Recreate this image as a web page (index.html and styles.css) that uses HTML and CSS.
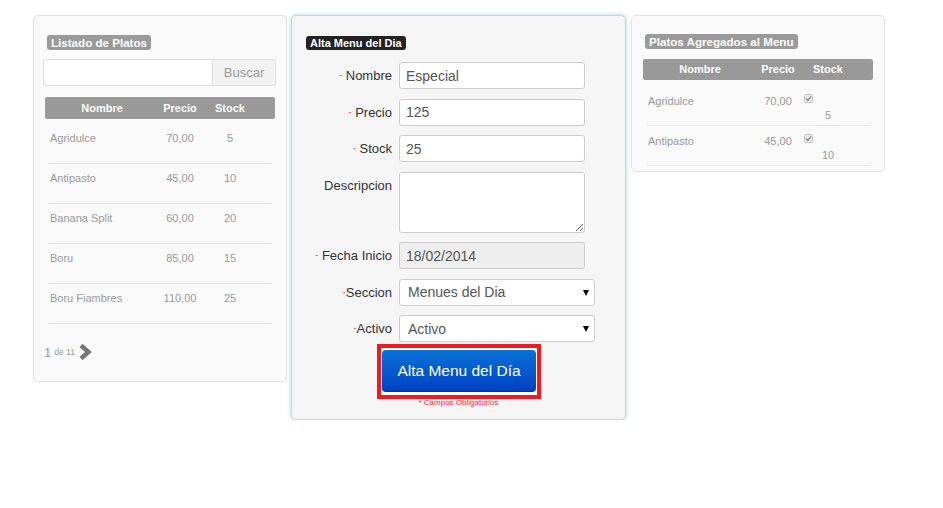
FILE: index.html
```html
<!DOCTYPE html>
<html lang="es">
<head>
<meta charset="utf-8">
<title>Alta Menu del Día</title>
<link rel="stylesheet" href="styles.css">
</head>
<body>
<div class="page">
  <section class="panel panel-list">
    <span class="tag tag-gray">Listado de Platos</span>
    <div class="search">
      <input class="search-input" type="text">
      <button class="search-btn" type="button">Buscar</button>
    </div>
    <div class="thead"><span>Nombre</span><span>Precio</span><span>Stock</span></div>
    <div class="rows">
      <div class="row"><span class="c-name">Agridulce</span><span class="c-num">70,00</span><span class="c-num">5</span></div>
      <div class="row"><span class="c-name">Antipasto</span><span class="c-num">45,00</span><span class="c-num">10</span></div>
      <div class="row"><span class="c-name">Banana Split</span><span class="c-num">60,00</span><span class="c-num">20</span></div>
      <div class="row"><span class="c-name">Boru</span><span class="c-num">85,00</span><span class="c-num">15</span></div>
      <div class="row"><span class="c-name">Boru Fiambres</span><span class="c-num">110,00</span><span class="c-num">25</span></div>
    </div>
    <div class="pager">
      <span class="pg-num">1</span><span class="pg-of">de 11</span>
      <svg class="pg-next" width="14" height="18" viewBox="0 0 14 18"><polyline points="3,2.5 10.5,9 3,15.5" fill="none" stroke="#777" stroke-width="4.4" stroke-linejoin="miter"/></svg>
    </div>
  </section>

  <section class="panel panel-form">
    <span class="tag tag-dark">Alta Menu del Dia</span>
    <form class="form">
      <div class="frow"><label class="flabel"><span class="req">-</span> Nombre</label><input class="finput" type="text" value="Especial"></div>
      <div class="frow"><label class="flabel"><span class="req">-</span> Precio</label><input class="finput" type="text" value="125"></div>
      <div class="frow"><label class="flabel"><span class="req">-</span> Stock</label><input class="finput" type="text" value="25"></div>
      <div class="frow frow-top"><label class="flabel flabel-top">Descripcion</label><textarea class="finput ftext"></textarea></div>
      <div class="frow"><label class="flabel"><span class="req">-</span> Fecha Inicio</label><input class="finput fdis" type="text" value="18/02/2014" readonly></div>
      <div class="frow"><label class="flabel"><span class="req">-</span>Seccion</label><div class="fselect-wrap"><select class="fselect"><option>Menues del Dia</option></select></div></div>
      <div class="frow"><label class="flabel"><span class="req">-</span>Activo</label><div class="fselect-wrap"><select class="fselect"><option>Activo</option></select></div></div>
      <div class="submit-frame"><button class="submit-btn" type="button">Alta Menu del Día</button></div>
      <p class="req-note">* Campos Obligatorios</p>
    </form>
  </section>

  <section class="panel panel-added">
    <span class="tag tag-gray">Platos Agregados al Menu</span>
    <div class="thead thead-r"><span>Nombre</span><span>Precio</span><span>Stock</span></div>
    <div class="rows rows-r">
      <div class="row row-r"><span class="c-name">Agridulce</span><span class="c-num">70,00</span><span class="c-stock"><svg class="chk" width="9" height="9" viewBox="0 0 9 9"><rect x="0.5" y="0.5" width="8" height="8" rx="1" fill="#ececec" stroke="#c4c4c4"/><polyline points="2,4.6 3.8,6.4 7,2.4" fill="none" stroke="#8a8a8a" stroke-width="1.4"/></svg><span class="stock-val">5</span></span></div>
      <div class="row row-r"><span class="c-name">Antipasto</span><span class="c-num">45,00</span><span class="c-stock"><svg class="chk" width="9" height="9" viewBox="0 0 9 9"><rect x="0.5" y="0.5" width="8" height="8" rx="1" fill="#ececec" stroke="#c4c4c4"/><polyline points="2,4.6 3.8,6.4 7,2.4" fill="none" stroke="#8a8a8a" stroke-width="1.4"/></svg><span class="stock-val">10</span></span></div>
    </div>
  </section>
</div>
</body>
</html>
```

FILE: styles.css
```css
html, body {
  margin: 0;
  background: #ffffff;
  font-family: "Liberation Sans", Arial, Helvetica, sans-serif;
}

.page {
  display: flex;
  align-items: flex-start;
  padding: 15px 0 0 33px;
}

.panel {
  box-sizing: border-box;
  display: flex;
  flex-direction: column;
  align-items: flex-start;
  border: 1px solid #e2e2e2;
  border-radius: 5px;
  background: #fafafa;
}

/* tags */
.tag {
  display: block;
  height: 15px;
  line-height: 15px;
  padding: 0 4px;
  border-radius: 3px;
  font-weight: bold;
  color: #ffffff;
}
.tag-gray {
  background: #9a9a9a;
  font-size: 11.6px;
  margin-left: 13px;
}
.tag-dark {
  background: #222222;
  font-size: 11px;
  height: 14px;
  line-height: 14px;
}

/* left panel */
.panel-list {
  width: 254px;
  padding: 19px 0 20px 0;
}

.search {
  display: flex;
  width: 233px;
  height: 27px;
  margin: 9px 0 0 9px;
}
.search-input {
  flex: 1;
  min-width: 0;
  box-sizing: border-box;
  height: 27px;
  margin: 0;
  border: 1px solid #dedede;
  border-right: none;
  border-radius: 3px 0 0 3px;
  background: #ffffff;
}
.search-btn {
  box-sizing: border-box;
  width: 64px;
  height: 27px;
  margin: 0;
  padding: 0;
  border: 1px solid #dedede;
  border-radius: 0 3px 3px 0;
  background: #f2f2f2;
  color: #9a9a9a;
  font-family: inherit;
  font-size: 13px;
}

.thead {
  display: grid;
  grid-template-columns: 114px 42px 58px 16px;
  width: 230px;
  height: 22px;
  margin: 11px 0 0 11px;
  background: #999999;
  border-radius: 2px;
  color: #ffffff;
  font-size: 11px;
  font-weight: bold;
  line-height: 22px;
  text-align: center;
}

.rows {
  width: 222px;
  margin: 5px 0 0 15px;
}
.row {
  display: grid;
  grid-template-columns: 110px 42px 58px 12px;
  box-sizing: border-box;
  height: 40px;
  padding-top: 8px;
  border-bottom: 1px solid #e4e4e4;
  font-size: 11px;
  line-height: 13px;
  color: #999999;
}
.c-name { padding-left: 1px; }
.c-num { text-align: center; }

.pager {
  display: flex;
  align-items: center;
  height: 18px;
  margin: 19px 0 0 10px;
  color: #999999;
}
.pg-num { font-size: 13px; }
.pg-of { font-size: 8.5px; margin-left: 3px; }
.pg-next { margin-left: 3px; }

/* middle form panel */
.panel-form {
  width: 335px;
  height: 405px;
  margin-left: 4px;
  padding: 20px 0 0 14px;
  background: #f5f5f5;
  border-color: #bcd6ee;
  box-shadow: 0 0 4px rgba(110, 165, 225, 0.55);
}

.form {
  align-self: stretch;
  display: flex;
  flex-direction: column;
  margin: 12px 0 0 0;
}
.frow {
  display: flex;
  align-items: center;
  margin-bottom: 9.5px;
}
.frow-top { align-items: flex-start; }
.flabel {
  width: 86px;
  margin-right: 7px;
  text-align: right;
  font-size: 13px;
  color: #333333;
  white-space: nowrap;
}
.flabel-top { padding-top: 6px; }
.req {
  color: #ee3333;
  font-size: 9px;
  vertical-align: 2px;
}
.finput {
  box-sizing: border-box;
  width: 186px;
  height: 27px;
  margin: 0;
  padding: 4px 6px;
  border: 1px solid #cccccc;
  border-radius: 3px;
  background: #ffffff;
  color: #555555;
  font-family: inherit;
  font-size: 14px;
}
.ftext {
  height: 61px;
  resize: both;
}
.fdis {
  background: #eeeeee;
}
.fselect-wrap {
  position: relative;
  width: 196px;
  height: 27px;
}
.fselect-wrap::after {
  content: "";
  position: absolute;
  right: 6px;
  top: 11px;
  border-left: 3.5px solid transparent;
  border-right: 3.5px solid transparent;
  border-top: 6px solid #000000;
}
.fselect {
  -webkit-appearance: none;
  appearance: none;
  box-sizing: border-box;
  width: 196px;
  height: 27px;
  margin: 0;
  padding: 0 8px;
  border: 1px solid #cccccc;
  border-radius: 3px;
  background: #ffffff;
  color: #555555;
  font-family: inherit;
  font-size: 14px;
}

.submit-frame {
  align-self: flex-start;
  margin: -7.5px 0 0 71px;
  padding: 2px 1px 3px 1px;
  border: 4px solid #ed1c24;
  background: #ffffff;
}
.submit-btn {
  display: block;
  box-sizing: border-box;
  width: 154px;
  height: 42px;
  margin: 0;
  padding: 0;
  border: none;
  border-bottom: 1px solid #00329c;
  border-radius: 4px;
  background: linear-gradient(#0b72d8, #0042c3);
  color: #ffffff;
  font-family: inherit;
  font-size: 15.5px;
}
.req-note {
  margin: -1px 0 0 0;
  padding-right: 14px;
  text-align: center;
  font-size: 8px;
  line-height: 9px;
  color: #ff1a4a;
}

/* right panel */
.panel-added {
  width: 254px;
  margin-left: 5px;
  padding: 18px 0 5px 0;
}
.thead-r {
  height: 21px;
  line-height: 21px;
  margin-top: 10px;
}
.rows-r { margin-top: 6px; }
.row-r {
  line-height: 14px;
}
.c-stock {
  display: flex;
  flex-direction: column;
}
.chk {
  display: block;
  margin: 0 0 5px 5px;
}
.stock-val {
  text-align: center;
}
```
